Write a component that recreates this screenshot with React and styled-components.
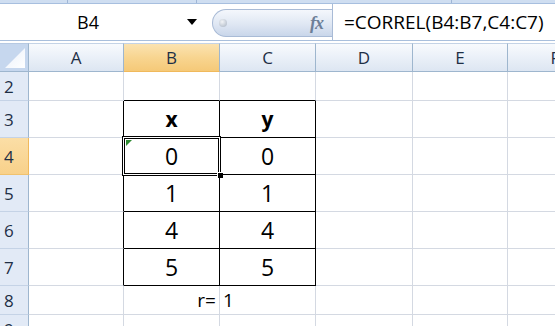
import React from 'react';
import styled, { createGlobalStyle, css } from 'styled-components';

const GlobalStyle = createGlobalStyle`
  html, body {
    margin: 0;
    padding: 0;
    background: #ffffff;
    overflow: hidden;
  }
  body {
    font-family: "Open Sans", "Noto Sans", sans-serif;
  }
`;

const COLUMNS = ['A', 'B', 'C', 'D', 'E', 'F'];
const ACTIVE_COL = 'B';
const ACTIVE_ROW = 4;

// rows 2..9 of the sheet, with their contents in columns B and C
const rows = [
  { n: 2, height: 29, cells: {} },
  { n: 3, height: 37, cells: { B: { text: 'x', bold: true }, C: { text: 'y', bold: true } } },
  { n: 4, height: 37, cells: { B: { text: '0' }, C: { text: '0' } } },
  { n: 5, height: 37, cells: { B: { text: '1' }, C: { text: '1' } } },
  { n: 6, height: 37, cells: { B: { text: '4' }, C: { text: '4' } } },
  { n: 7, height: 37, cells: { B: { text: '5' }, C: { text: '5' } } },
  { n: 8, height: 29, cells: { B: { text: 'r=', align: 'right', small: true }, C: { text: '1', align: 'left', small: true } } },
  { n: 9, height: 29, cells: {} },
];

const inTable = (col, row) => (col === 'B' || col === 'C') && row >= 3 && row <= 7;

const Window = styled.div`
  width: 555px;
  height: 326px;
  display: flex;
  flex-direction: column;
  overflow: hidden;
  background: #ffffff;
`;

const TopStrip = styled.div`
  flex-shrink: 0;
  height: 3px;
  background: #cfdef1;
  border-bottom: 1px solid #a7bfdf;
  display: flex;
`;

const StripTab = styled.div`
  width: ${(p) => p.w}px;
  border-right: 1px solid #9fb6d6;
`;

const FormulaBar = styled.div`
  flex-shrink: 0;
  height: 36px;
  display: flex;
  align-items: stretch;
  background: #ffffff;
  border-bottom: 1px solid #a9bfdc;
`;

const NameBox = styled.div`
  width: 206px;
  display: flex;
  align-items: center;
  font-size: 18px;
  color: #000;
`;

const NameText = styled.div`
  width: 176px;
  text-align: center;
`;

const DropArrow = styled.div`
  margin-left: 11px;
  width: 0;
  height: 0;
  border-left: 5px solid transparent;
  border-right: 5px solid transparent;
  border-top: 6px solid #000;
`;

const Pill = styled.div`
  margin-left: 6px;
  margin-top: 5px;
  margin-bottom: 3px;
  width: 119px;
  border: 1px solid #a9bbd6;
  border-right: none;
  border-radius: 14px 0 0 14px;
  background: linear-gradient(#f4f7fc, #dfe7f3 55%, #c9d6ea);
  display: flex;
  align-items: center;
`;

const PillKnob = styled.div`
  margin-left: 6px;
  width: 8px;
  height: 8px;
  border-radius: 50%;
  background: radial-gradient(circle at 40% 35%, #f2f4f7, #a8b3c2);
`;

const Fx = styled.div`
  margin-left: auto;
  margin-right: 9px;
  font-family: "Liberation Serif", "DejaVu Serif", serif;
  font-style: italic;
  font-weight: bold;
  font-size: 18px;
  color: #6d7f98;
  letter-spacing: -1px;
`;

const FormulaInput = styled.div`
  flex: 1;
  border-left: 1px solid #a9bbd6;
  display: flex;
  align-items: center;
  padding-left: 11px;
  font-size: 19px;
  color: #000;
  white-space: nowrap;
`;

const Gap = styled.div`
  flex-shrink: 0;
  height: 2px;
  background: #ffffff;
`;

const Sheet = styled.div`
  flex: 1;
  min-height: 0;
  overflow: hidden;
  display: grid;
  grid-template-columns: 29px 95px 96px 96px 97px 95px 95px;
  grid-template-rows: 29px ${rows.map((r) => `${r.height}px`).join(' ')};
`;

const headerBase = css`
  box-sizing: border-box;
  border-right: 1px solid #9eb6ce;
  border-bottom: 1px solid #9eb6ce;
  color: #1e2f45;
  font-size: 17px;
  display: flex;
  align-items: center;
`;

const Corner = styled.div`
  ${headerBase};
  background: #c6d7ee;
  position: relative;
  border-top: 1px solid #b6c9e2;
`;

const CornerMark = styled.svg`
  position: absolute;
  right: 3px;
  bottom: 3px;
`;

const ColHeader = styled.div`
  ${headerBase};
  justify-content: center;
  border-top: 1px solid #c4d3e6;
  background: ${(p) =>
    p.active
      ? 'linear-gradient(#fbe3b1, #f8d590 50%, #f5c978)'
      : 'linear-gradient(#f8fafd, #eaf0f8 50%, #dde6f2)'};
  border-bottom-color: ${(p) => (p.active ? '#f0b95c' : '#9eb6ce')};
`;

const RowHeader = styled.div`
  ${headerBase};
  padding-left: 4px;
  background: ${(p) => (p.active ? 'linear-gradient(#fbdea6, #f8d18a)' : '#e2eaf6')};
  border-bottom-color: ${(p) => (p.active ? '#f0c26e' : '#c5d3e6')};
  border-right-color: ${(p) => (p.active ? '#f0b95c' : '#9eb6ce')};
`;

const Cell = styled.div`
  box-sizing: border-box;
  position: relative;
  border-right: 1px solid ${(p) => (p.r ? '#000' : '#d4d9e2')};
  border-bottom: 1px solid ${(p) => (p.b ? '#000' : '#d4d9e2')};
  display: flex;
  align-items: center;
  justify-content: ${(p) =>
    p.align === 'right' ? 'flex-end' : p.align === 'left' ? 'flex-start' : 'center'};
  padding: 0 3px;
  font-size: ${(p) => (p.small ? '19px' : p.bold ? '21px' : '23px')};
  font-weight: ${(p) => (p.bold ? 700 : 400)};
  color: #000;
`;

const Selection = styled.div`
  position: absolute;
  left: -2px;
  top: -2px;
  right: -2px;
  bottom: -2px;
  border: 1px solid #000;
  box-shadow: inset 0 0 0 1px #fff, inset 0 0 0 2px #000;
  pointer-events: none;
`;

const FillHandle = styled.div`
  position: absolute;
  right: -5px;
  bottom: -5px;
  width: 5px;
  height: 5px;
  background: #000;
  border: 1px solid #fff;
`;

const ErrorMark = styled.div`
  position: absolute;
  left: 2px;
  top: 2px;
  width: 0;
  height: 0;
  border-top: 6px solid #2f8a32;
  border-right: 6px solid transparent;
`;

const App = () => (
  <Window>
    <GlobalStyle />
    <TopStrip>
      <StripTab w={67} />
      <StripTab w={128} />
      <StripTab w={254} />
    </TopStrip>
    <FormulaBar>
      <NameBox>
        <NameText>B4</NameText>
        <DropArrow />
      </NameBox>
      <Pill>
        <PillKnob />
        <Fx>fx</Fx>
      </Pill>
      <FormulaInput>=CORREL(B4:B7,C4:C7)</FormulaInput>
    </FormulaBar>
    <Gap />
    <Sheet>
      <Corner>
        <CornerMark width="20" height="20" viewBox="0 0 20 20">
          <defs>
            <linearGradient id="cornerFill" x1="0" y1="0" x2="1" y2="1">
              <stop offset="0" stopColor="#e9f0fa" />
              <stop offset="1" stopColor="#ffffff" />
            </linearGradient>
          </defs>
          <polygon points="20,0 20,20 0,20" fill="url(#cornerFill)" />
        </CornerMark>
      </Corner>
      {COLUMNS.map((c) => (
        <ColHeader key={c} active={c === ACTIVE_COL}>
          {c}
        </ColHeader>
      ))}
      {rows.map((row) => (
        <React.Fragment key={row.n}>
          <RowHeader active={row.n === ACTIVE_ROW}>{row.n}</RowHeader>
          {COLUMNS.map((col, i) => {
            const next = COLUMNS[i + 1];
            const content = row.cells[col] || {};
            const r = inTable(col, row.n) || (next && inTable(next, row.n));
            const b = inTable(col, row.n) || inTable(col, row.n + 1);
            const selected = col === ACTIVE_COL && row.n === ACTIVE_ROW;
            return (
              <Cell
                key={col}
                r={r}
                b={b}
                align={content.align}
                bold={content.bold}
                small={content.small}
              >
                {content.text}
                {selected && (
                  <>
                    <ErrorMark />
                    <Selection />
                    <FillHandle />
                  </>
                )}
              </Cell>
            );
          })}
        </React.Fragment>
      ))}
    </Sheet>
  </Window>
);

export default App;
